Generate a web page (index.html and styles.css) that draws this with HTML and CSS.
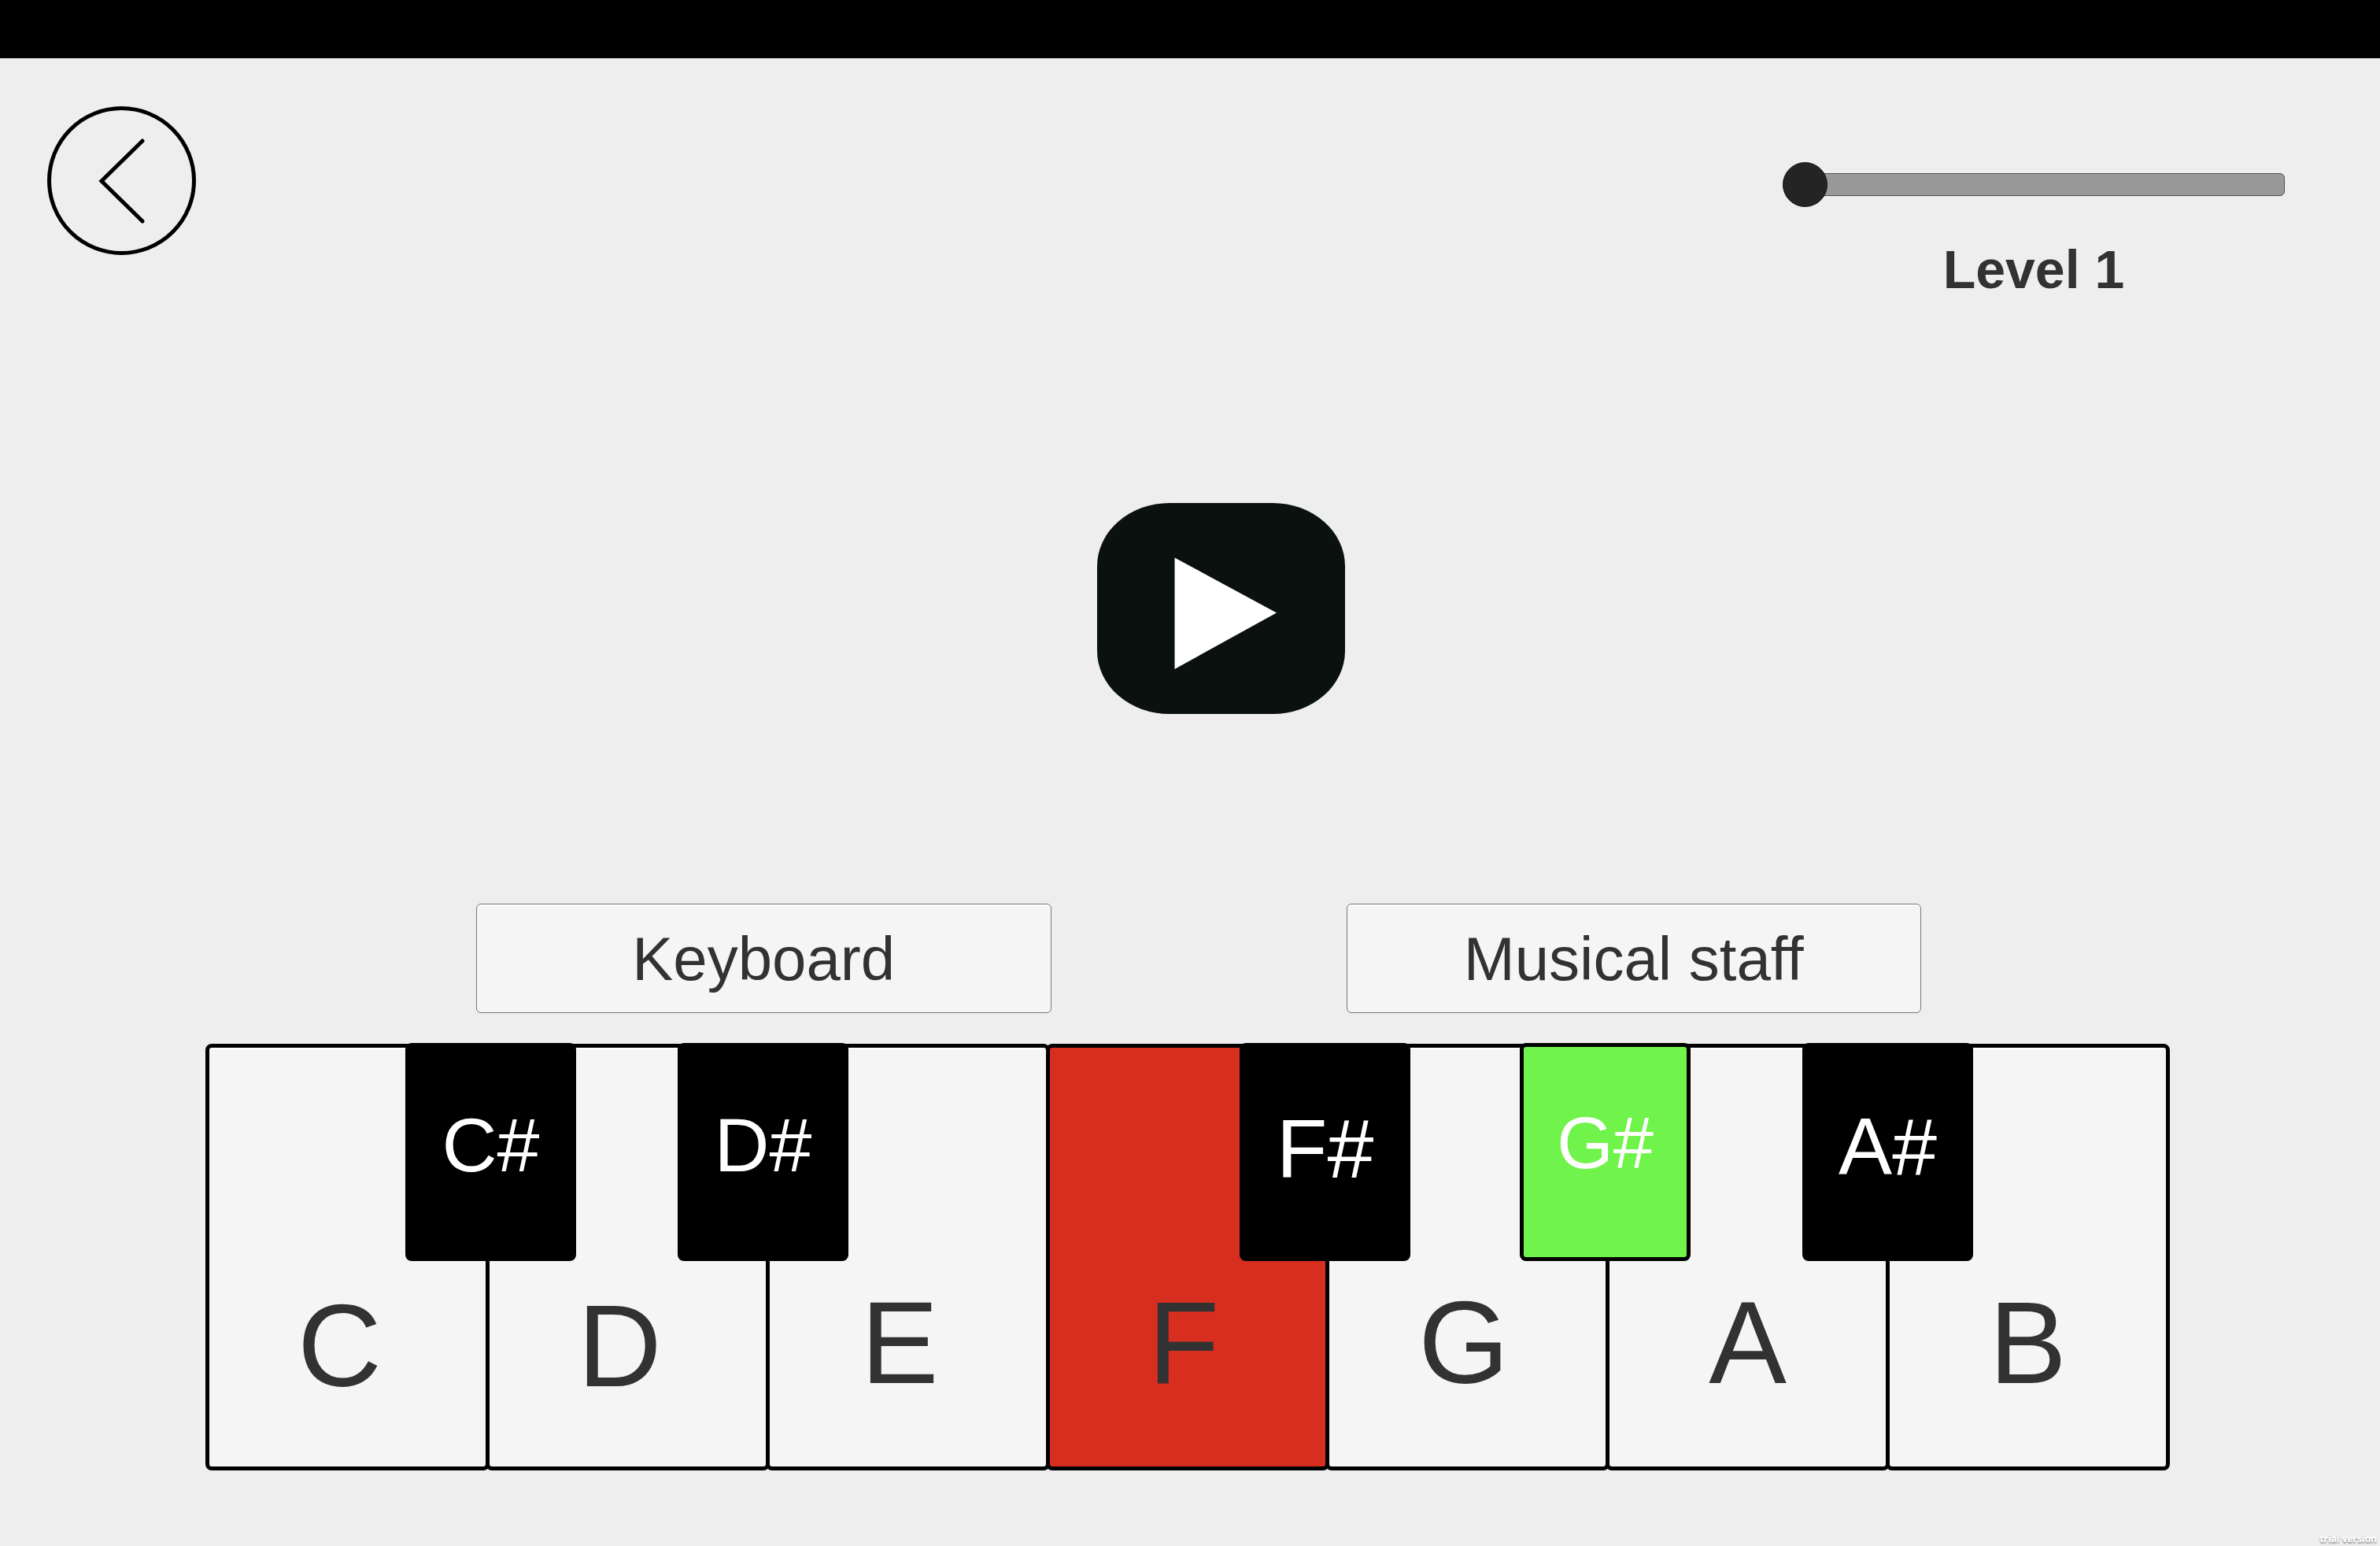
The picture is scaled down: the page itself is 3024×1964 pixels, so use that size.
FILE: index.html
```html
<!DOCTYPE html>
<html lang="en">
<head>
<meta charset="utf-8">
<meta name="viewport" content="width=device-width, initial-scale=1">
<title>Ear training</title>
<link rel="stylesheet" href="styles.css">
</head>
<body class="app">
  <div class="status-bar"></div>
  <header class="header">
    <button class="back" type="button" aria-label="Back">
      <svg class="back-icon" viewBox="0 0 189 189" aria-hidden="true">
        <circle cx="94.500" cy="94.500" r="92"/>
        <path d="M121 44 L69 95 L121 146"/>
      </svg>
    </button>
    <div class="level">
      <input class="level-slider" id="level" type="range" min="1" max="10" value="1">
      <label class="level-label" for="level">Level 1</label>
    </div>
  </header>
  <main class="main">
    <section class="stage">
      <button class="play" type="button" aria-label="Play">
        <svg class="play-icon" viewBox="0 0 315 268" aria-hidden="true">
          <path d="M98.500 69.500 L228 139.500 L98.500 211 Z"/>
        </svg>
      </button>
    </section>
    <nav class="modes">
      <button class="mode" type="button">Keyboard</button>
      <button class="mode" type="button">Musical staff</button>
    </nav>
    <section class="piano">
      <div class="naturals">
        <button class="key key-start key-low" type="button">C</button>
        <button class="key key-start key-low" type="button">D</button>
        <button class="key key-start" type="button">E</button>
        <button class="key key-middle key-wrong" type="button">F</button>
        <button class="key key-middle" type="button">G</button>
        <button class="key" type="button">A</button>
        <button class="key" type="button">B</button>
      </div>
      <div class="sharps">
        <button class="sharp sharp-c" type="button">C#</button>
        <button class="sharp sharp-d" type="button">D#</button>
        <button class="sharp sharp-f" type="button">F#</button>
        <button class="sharp sharp-g sharp-right" type="button">G#</button>
        <button class="sharp sharp-a" type="button">A#</button>
      </div>
    </section>
  </main>
  <footer class="footer">trial version</footer>
</body>
</html>
```
FILE: styles.css
```css
* {
  box-sizing: border-box;
}

.app {
  display: flex;
  flex-direction: column;
  min-height: 100vh;
  margin: 0;
  background: #eee;
  color: #323232;
  font-family: Arial, "Liberation Sans", sans-serif;
}

button {
  margin: 0;
  padding: 0;
  color: inherit;
  font-family: inherit;
  cursor: pointer;
}

.status-bar {
  height: 74px;
  background: #000;
}

.header {
  display: flex;
  justify-content: space-between;
  align-items: flex-start;
  padding: 61px 121px 0 60px;
}

.back {
  width: 189px;
  height: 189px;
  border: 0;
  border-radius: 50%;
  background: none;
}

.back-icon {
  display: block;
  width: 100%;
  fill: none;
  stroke: #000;
  stroke-width: 5px;
  stroke-linecap: round;
}

.level {
  display: flex;
  flex-direction: column;
  gap: 45px;
  width: 638px;
  padding-top: 70px;
}

.level-slider {
  width: 100%;
  height: 58px;
  margin: 0;
  background: none;
  appearance: none;
}

.level-slider::-webkit-slider-runnable-track {
  height: 29px;
  margin-left: 20px;
  border: 1px solid #505050;
  border-radius: 6px;
  background: #999;
}

.level-slider::-webkit-slider-thumb {
  width: 57px;
  height: 57px;
  margin: -15px 0 0 -21px;
  border: 1px solid #111;
  border-radius: 50%;
  background: #242424;
  appearance: none;
}

.level-label {
  font-size: 68px;
  font-weight: bold;
  line-height: 68px;
  text-align: center;
}

.main {
  display: flex;
  flex: 1;
  flex-direction: column;
}

.stage {
  display: flex;
  flex: 1;
  justify-content: center;
  align-items: center;
  padding: 22px 0 0 78px;
}

.play {
  width: 315px;
  height: 268px;
  border: 0;
  border-radius: 92px / 80px;
  background: #0a110e;
}

.play-icon {
  display: block;
  width: 100%;
  fill: #fff;
}

.modes {
  display: flex;
  gap: 375px;
  padding: 0 583px 0 605px;
}

.mode {
  flex: 1;
  height: 139px;
  border: 1px solid #777;
  border-radius: 6px;
  background: #f5f5f5;
  box-shadow: inset 0 2px #fff;
  font-size: 78px;
  line-height: 78px;
}

.piano {
  position: relative;
  margin: 39px 267px 0 261px;
}

/* Each key runs 5px into the next one, so that neighbours share a border */
.naturals {
  display: grid;
  grid-template-columns: repeat(7, minmax(0, 1fr));
  padding-right: 5px;
}

.key {
  display: flex;
  justify-content: center;
  align-items: flex-end;
  height: 542px;
  margin-right: -5px;
  padding-bottom: 83px;
  border: 5px solid #000;
  border-radius: 8px;
  background: #f5f5f5;
  box-shadow: inset 0 2px #fff;
  font-size: 148px;
  line-height: 148px;
}

.key-start {
  padding-right: 20px;
}

.key-middle {
  padding-right: 10px;
}

.key-low {
  padding-bottom: 79px;
}

.key-wrong {
  background: #d82e20;
  box-shadow: none;
}

/* Overlay whose empty tracks are the stretches between the black keys */
.sharps {
  position: absolute;
  inset: -1px 0 auto;
  display: grid;
  grid-template-columns: 254fr 217fr 129fr 217fr 497fr 217fr 139fr 217fr 142fr 217fr 250fr;
  height: 277px;
  pointer-events: none;
}

.sharp {
  display: flex;
  justify-content: center;
  align-items: flex-start;
  padding-top: 76px;
  border: 5px solid #000;
  border-radius: 8px;
  background: #000;
  color: #fff;
  font-size: 97px;
  line-height: 1;
  pointer-events: auto;
}

.sharp-c {
  grid-column: 2;
}

.sharp-d {
  grid-column: 4;
}

.sharp-f {
  grid-column: 6;
  font-size: 106px;
}

.sharp-g {
  grid-column: 8;
  font-size: 92px;
}

.sharp-a {
  grid-column: 10;
  font-size: 102px;
}

.sharp-right {
  background: #70f34a;
}

.footer {
  display: flex;
  justify-content: flex-end;
  align-items: flex-end;
  height: 96px;
  padding: 0 4px 1px;
  color: #fff;
  font-family: "Open Sans", sans-serif;
  font-size: 12px;
  font-weight: 700;
  line-height: 16px;
  text-shadow: 0 2px 2px #888;
}
```
